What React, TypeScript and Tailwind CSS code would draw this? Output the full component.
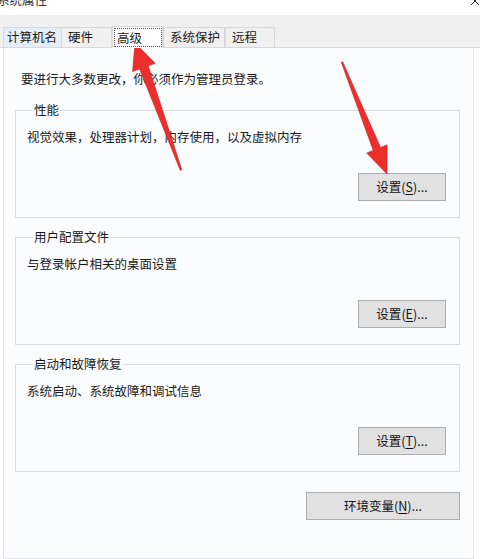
const font = { fontFamily: '"Noto Sans CJK SC", "Noto Sans", sans-serif' };

interface Group {
  title: string;
  desc: string;
  key: string;
}

const groups: Group[] = [
  { title: '性能', desc: '视觉效果，处理器计划，内存使用，以及虚拟内存', key: 'S' },
  { title: '用户配置文件', desc: '与登录帐户相关的桌面设置', key: 'E' },
  { title: '启动和故障恢复', desc: '系统启动、系统故障和调试信息', key: 'T' },
];

const tabs = ['计算机名', '硬件', '高级', '系统保护', '远程'];

function WinButton({ label, hotkey, w }: { label: string; hotkey: string; w: string }) {
  return (
    <button
      className={`${w} h-[28px] bg-[#e1e1e1] border border-[#adadad] text-[12.5px] text-[#111] leading-none flex items-center justify-center`}
    >
      {label}(<span className="underline underline-offset-2">{hotkey}</span>)...
    </button>
  );
}

export default function App() {
  return (
    <div
      className="relative w-[480px] h-[559px] overflow-hidden bg-white text-[#1a1a1a] flex flex-col"
      style={font}
    >
      {/* title bar, mostly cut off */}
      <div className="h-[15px] flex justify-between items-start bg-white">
        <span className="-mt-[9px] -ml-[3px] text-[12.5px] text-[#333]">系统属性</span>
        <svg width="10" height="8" viewBox="0 0 10 8" className="mr-[-1px]">
          <path d="M0 -3L8 5M8 -3L0 5" stroke="#333" strokeWidth="1" fill="none" />
        </svg>
      </div>

      {/* tab strip */}
      <div className="h-[33px] bg-[#f0f0f0] flex items-end pl-[3px] border-b border-[#d9d9d9]">
        {tabs.map((t, i) => {
          const selected = i === 2;
          const widths = ['w-[59px]', 'w-[51px]', 'w-[51px]', 'w-[62px]', 'w-[50px]'];
          if (selected) {
            return (
              <div
                key={t}
                className={`${widths[i]} h-[22px] -mb-px bg-white border border-b-0 border-[#d9d9d9] flex items-start pt-[1px] pl-[1px] z-10`}
              >
                <span className="h-[19px] w-[48px] border border-dotted border-[#555] text-[12.5px] leading-[17px] pl-[2px]">
                  {t}
                </span>
              </div>
            );
          }
          return (
            <div
              key={t}
              className={`${widths[i]} h-[20px] border border-b-0 border-[#d9d9d9] text-[12.5px] leading-[18px] ${
                i === 0 ? 'bg-[#e5eef8] pl-[3px]' : 'bg-[#f0f0f0] pl-[6px]'
              } ${i === 1 ? '-ml-px' : ''}`}
            >
              {t}
            </div>
          );
        })}
      </div>

      {/* panel */}
      <div className="flex-1 bg-[#fbfcfe] ml-[3px] mr-[6px] border-x border-b border-[#e3e6ea] pl-[11px] pr-[13px] pt-[23px] flex flex-col">
        <p className="text-[12.5px] leading-[16px] pl-[6px]">要进行大多数更改，你必须作为管理员登录。</p>

        {groups.map((g, i) => (
          <fieldset
            key={g.title}
            className={`border border-[#dcdcdc] px-[10px] pb-[16px] flex flex-col ${i === 0 ? 'mt-[16px]' : 'mt-[12px]'}`}
          >
            <legend className="ml-[7px] px-[1px] text-[12.5px] leading-[14px]">{g.title}</legend>
            <p className="pt-[12px] text-[12.5px] leading-[16px] pl-[1px]">{g.desc}</p>
            <div className="mt-[28px] flex justify-end pr-[3px]">
              <WinButton label="设置" hotkey={g.key} w="w-[88px]" />
            </div>
          </fieldset>
        ))}

        <div className="mt-[20px] flex justify-end">
          <WinButton label="环境变量" hotkey="N" w="w-[154px]" />
        </div>
      </div>

      {/* red annotation arrows */}
      <svg className="absolute inset-0 pointer-events-none" width="480" height="559" viewBox="0 0 480 559">
        <polygon
          points="135,43 132.6,71.5 139.6,69 180.2,170.3 181.8,169.7 148.2,65.8 155.2,63.3"
          fill="#ec2f2c"
          stroke="#c62320"
          strokeWidth="0.6"
          strokeLinejoin="round"
        />
        <polygon
          points="387,174 387.1,144.8 380.6,147.4 342.7,61.7 341.3,62.3 373.2,150.4 366.7,153"
          fill="#ec2f2c"
          stroke="#c62320"
          strokeWidth="0.6"
          strokeLinejoin="round"
        />
      </svg>
    </div>
  );
}
